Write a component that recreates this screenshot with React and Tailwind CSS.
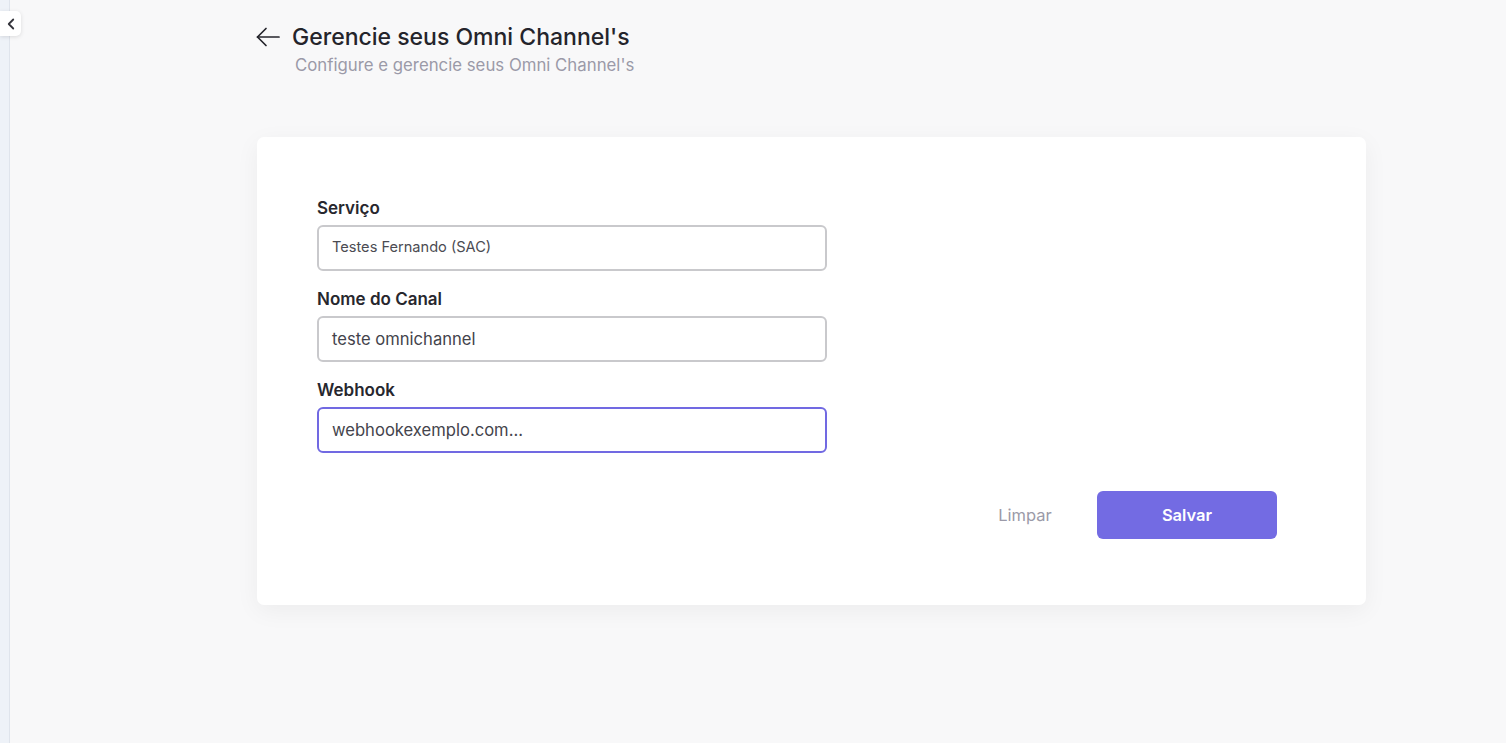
import { ChevronLeft } from "lucide-react";

function Field({ label, value, focused, small }) {
  return (
    <div className="flex flex-col gap-[5px]">
      <label className="text-[17px] leading-[24px] font-semibold text-[#27272e]">{label}</label>
      <div
        className={
          "h-[46px] w-[510px] rounded-[6px] border-2 bg-white px-[13px] flex items-center " +
          (focused ? "border-[#7169e2]" : "border-[#c9c9cc]")
        }
      >
        <span className={small ? "text-[14.6px] text-[#4b4b52]" : "text-[16.6px] text-[#44444c]"}>{value}</span>
      </div>
    </div>
  );
}

export default function App() {
  return (
    <div
      className="flex h-[743px] w-full bg-[#f8f8f9]"
      style={{ fontFamily: "Inter, 'Noto Sans', sans-serif" }}
    >
      {/* sidebar collapsed */}
      <div className="relative w-[10px] shrink-0 border-r border-[#dfe4ec] bg-[#eef2f8]">
        <button className="absolute left-0 top-[11px] flex h-[25px] w-[21px] items-center justify-center rounded-r-[5px] bg-white shadow-[0_1px_4px_rgba(0,0,0,0.12)]">
          <ChevronLeft size={18} strokeWidth={2.4} className="text-[#33333a]" />
        </button>
      </div>

      {/* content */}
      <div className="flex-1 pl-[246px] pt-[22px]">
        {/* header */}
        <div className="flex items-center gap-[12px]">
          <svg width="24" height="20" viewBox="0 0 24 20" fill="none" stroke="#24242b" strokeWidth="1.7" strokeLinecap="round" strokeLinejoin="round">
            <path d="M23 10H1.5" />
            <path d="M10 1.5L1.5 10L10 18.5" />
          </svg>
          <h1 className="text-[23px] leading-[30px] font-medium text-[#24242b]">Gerencie seus Omni Channel's</h1>
        </div>
        <p className="ml-[39px] mt-[2px] text-[16.8px] leading-[22px] text-[#9b9aa8]">
          Configure e gerencie seus Omni Channel's
        </p>

        {/* card */}
        <div className="ml-px mt-[61px] w-[1109px] rounded-[7px] bg-white pl-[60px] pr-[89px] pt-[59px] pb-[66px] shadow-[0_6px_24px_rgba(0,0,0,0.05)]">
          <div className="flex flex-col gap-[16px]">
            <Field label="Serviço" value="Testes Fernando (SAC)" small />
            <Field label="Nome do Canal" value="teste omnichannel" />
            <Field label="Webhook" value="webhookexemplo.com..." focused />
          </div>

          <div className="mt-[38px] flex items-center justify-end gap-[12px]">
            <button className="h-[48px] w-[120px] text-[16.5px] text-[#9b9aa8]">Limpar</button>
            <button className="h-[48px] w-[180px] rounded-[6px] bg-[#736be3] text-[16.5px] font-semibold text-white">
              Salvar
            </button>
          </div>
        </div>
      </div>
    </div>
  );
}
